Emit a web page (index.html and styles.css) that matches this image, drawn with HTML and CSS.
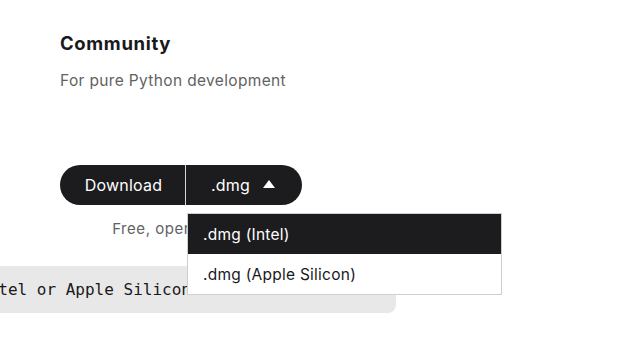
FILE: index.html
```html
<!DOCTYPE html>
<html lang="en">
<head>
    <meta charset="UTF-8">
    <meta name="viewport" content="width=device-width, initial-scale=1.0">
    <title>Community</title>
    <link rel="stylesheet" href="styles.css">
</head>
<body>
    <main class="edition">
        <h3 class="ed_title">Community</h3>
        <p class="ed_sub">For pure Python development</p>

        <div class="dl_wrap">
            <div class="dl_group">
                <button class="but_dl" type="button">Download</button>
                <button class="but_ext" type="button">.dmg <span class="arrow"></span></button>
                <ul class="dl_menu">
                    <li class="dl_item active">.dmg (Intel)</li>
                    <li class="dl_item">.dmg (Apple Silicon)</li>
                </ul>
            </div>
            <p class="dl_note">Free, open source</p>
        </div>

        <div class="code_box">
            <code>Intel or Apple Silicon</code>
        </div>
    </main>
</body>
</html>
```

FILE: styles.css
```css
*{
    box-sizing: border-box;
}
body{
    margin: 0;
    background: #fff;
    font-family: Inter, "Noto Sans", sans-serif;
    color: #19191c;
    overflow: hidden;
}
.edition{
    padding: 31px 0 0 60px;
    display: flex;
    flex-direction: column;
    align-items: flex-start;
}
.ed_title{
    margin: 0;
    font-size: 18.5px;
    font-weight: 700;
    line-height: 24px;
    letter-spacing: 0.65px;
}
.ed_sub{
    margin: 15px 0 0 0;
    font-size: 15.5px;
    line-height: 22px;
    letter-spacing: 0.35px;
    color: #626264;
}
.dl_wrap{
    margin-top: 73px;
    display: flex;
    flex-direction: column;
    align-items: center;
}
.dl_group{
    position: relative;
    display: flex;
    height: 40px;
}
.but_dl, .but_ext{
    border: none;
    background: #1c1c1e;
    color: #fff;
    font-family: Inter, "Noto Sans", sans-serif;
    font-size: 16px;
    letter-spacing: 0.2px;
    height: 40px;
    cursor: pointer;
}
.but_dl{
    width: 126px;
    padding: 0 0 0 2px;
    border-radius: 20px 0 0 20px;
    border-right: 1px solid #d6d6d6;
}
.but_ext{
    width: 116px;
    padding: 0 2px 0 0;
    border-radius: 0 20px 20px 0;
    display: flex;
    align-items: center;
    justify-content: center;
    gap: 13px;
}
.arrow{
    width: 0;
    height: 0;
    border-left: 6.5px solid transparent;
    border-right: 6.5px solid transparent;
    border-bottom: 8px solid #fff;
    margin-top: -2px;
}
.dl_menu{
    position: absolute;
    left: 127px;
    top: 48px;
    width: 315px;
    margin: 0;
    padding: 0;
    list-style: none;
    background: #fff;
    border: 1px solid #cfcfcf;
    z-index: 5;
}
.dl_item{
    height: 40px;
    padding-left: 15px;
    display: flex;
    align-items: center;
    font-size: 15.5px;
    letter-spacing: 0.25px;
    color: #19191c;
}
.dl_item.active{
    background: #1c1c1e;
    color: #fff;
}
.dl_note{
    margin: 14px 0 0 0;
    font-size: 15px;
    line-height: 20px;
    letter-spacing: 0.55px;
    color: #626264;
}
.code_box{
    margin: 27px 0 0 -97px;
    width: 433px;
    height: 47px;
    padding-left: 16px;
    background: #e8e8e8;
    border-radius: 0 8px 8px 0;
    display: flex;
    align-items: center;
}
.code_box code{
    font-family: "DejaVu Sans Mono", monospace;
    font-size: 16px;
    color: #19191c;
    white-space: pre;
}
```
